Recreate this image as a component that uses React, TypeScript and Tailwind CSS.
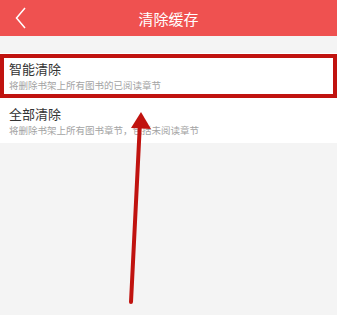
import React from "react";

export default function App() {
  const font = { fontFamily: '"Noto Sans CJK SC", "Noto Sans", sans-serif' };
  return (
    <div className="relative w-[337px] h-[315px] bg-[#f4f4f4] overflow-hidden" style={font}>
      <div className="relative h-[36px] bg-[#ef5150] flex items-center justify-center">
        <svg className="absolute left-[15px] top-[7px]" width="11" height="22" viewBox="0 0 11 22">
          <path d="M10 1 L1.5 11 L10 21" fill="none" stroke="white" strokeWidth="1.5" />
        </svg>
        <span className="text-white text-[15px] leading-none">清除缓存</span>
      </div>
      <div className="h-[17px]" />
      <div className="bg-white">
        <div className="relative h-[46px] pl-[9px] pt-[7px] flex flex-col">
          <span className="text-[13px] leading-[18px] text-[#333]">智能清除</span>
          <span className="text-[9.5px] leading-[14px] text-[#a3a3a3]">将删除书架上所有图书的已阅读章节</span>
          <div className="absolute left-0 right-0 top-[1px] bottom-[1px] border-[4px] border-[#c0130f]" />
        </div>
        <div className="h-[44px] pl-[9px] pt-[6px] flex flex-col">
          <span className="text-[13px] leading-[18px] text-[#333]">全部清除</span>
          <span className="text-[9.5px] leading-[14px] text-[#a3a3a3]">将删除书架上所有图书章节，包括未阅读章节</span>
        </div>
      </div>
      <svg className="absolute left-0 top-0" width="337" height="315" viewBox="0 0 337 315">
        <line x1="131" y1="302" x2="140" y2="122" stroke="#c0130f" strokeWidth="4" strokeLinecap="round" />
        <polygon points="141,112 151,129 131,128" fill="#c0130f" />
      </svg>
    </div>
  );
}
